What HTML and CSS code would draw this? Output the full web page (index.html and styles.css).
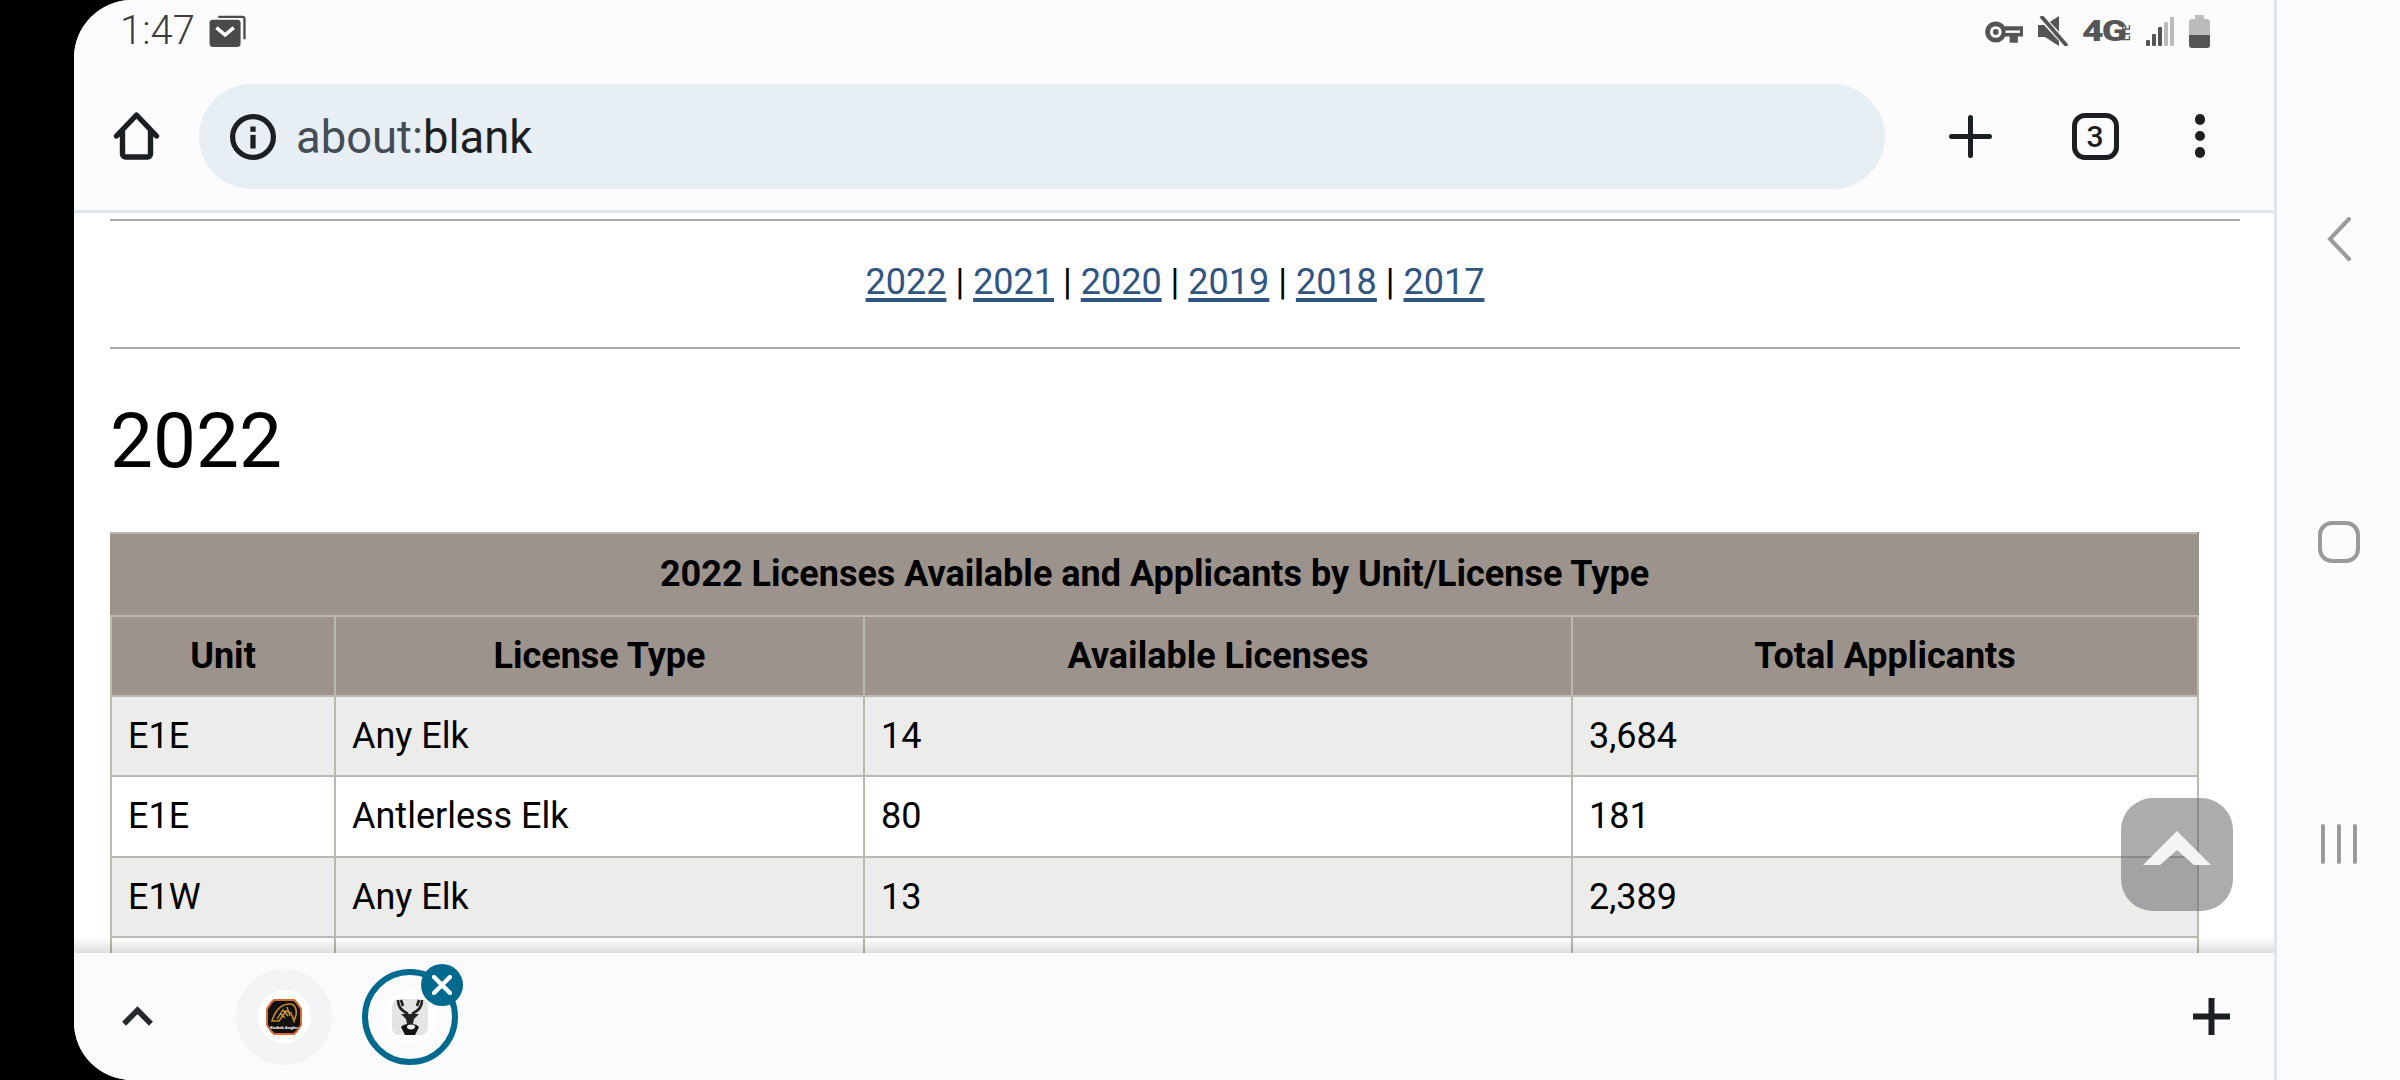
FILE: index.html
```html
<!DOCTYPE html>
<html lang="en">
<head>
<meta charset="utf-8">
<title>about:blank</title>
<link rel="stylesheet" href="styles.css">
</head>
<body>
<div class="device">
  <div class="app">
    <header class="chrome">
      <div class="status">
        <div class="status-left">
          <span class="time">1:47</span>
          <svg class="ic-mail" viewBox="0 0 37 33"><path d="M9 2h25a2 2 0 0 1 2 2v21" fill="none" stroke="#4a4a4a" stroke-width="2.4"/><rect x="0" y="5" width="32" height="28" rx="3.5" fill="#4a4a4a"/><path d="M7 13l9 7.5L25 13" fill="none" stroke="#fff" stroke-width="3.6"/></svg>
        </div>
        <div class="status-right">
          <svg class="ic-key" viewBox="0 0 37 21"><circle cx="10.5" cy="10.5" r="8" fill="none" stroke="#555" stroke-width="4.6"/><circle cx="10.5" cy="10.5" r="2.8" fill="#555"/><path d="M18 5h19v10h-5v6h-8v-6h-6z" fill="#555"/><path d="M20 9h14v2.4H20z" fill="#fcfcfe"/></svg>
          <svg class="ic-mute" viewBox="0 0 30 30"><path d="M0 9h7L21 0v30L7 21H0z" fill="#555"/><path d="M3 1l26 28" stroke="#fcfcfe" stroke-width="6.4"/><path d="M3 0l26 30" stroke="#555" stroke-width="3.8"/></svg>
          <span class="net"><span class="net-main">4G</span><span class="net-sub">LTE</span></span>
          <svg class="ic-signal" viewBox="0 0 28 29"><rect x="0" y="23" width="4" height="6" rx="1" fill="#555"/><rect x="6" y="17" width="4" height="12" rx="1" fill="#555"/><rect x="12" y="10" width="4" height="19" rx="1" fill="#555"/><rect x="18" y="5" width="4" height="24" rx="1" fill="#bbb"/><rect x="24" y="0" width="4" height="29" rx="1" fill="#bbb"/></svg>
          <svg class="ic-battery" viewBox="0 0 21 33"><path d="M6 0h9v4h3a3 3 0 0 1 3 3v13H0V7a3 3 0 0 1 3-3h3z" fill="#bcbcbc"/><path d="M0 20h21v10a3 3 0 0 1-3 3H3a3 3 0 0 1-3-3z" fill="#555"/></svg>
        </div>
      </div>
      <div class="toolbar">
        <div class="home-box">
          <svg class="ic-home" viewBox="0 0 46 48"><path d="M3 24L23 3l20 21M9 19v23a3 3 0 0 0 3 3h22a3 3 0 0 0 3-3V19" fill="none" stroke="#1b1f22" stroke-width="5.4" stroke-linecap="round" stroke-linejoin="round"/></svg>
        </div>
        <div class="omnibox">
          <svg class="ic-info" viewBox="0 0 44 44"><circle cx="22" cy="22" r="19.5" fill="none" stroke="#1b1f22" stroke-width="5"/><rect x="19.5" y="12" width="5" height="5" fill="#1b1f22"/><rect x="19.5" y="20" width="5" height="13" fill="#1b1f22"/></svg>
          <span class="url"><span class="url-scheme">about:</span>blank</span>
        </div>
        <div class="tool tool-plus">
          <svg class="ic-plus" viewBox="0 0 43 43"><path d="M21.5 2.5v38M2.5 21.5h38" fill="none" stroke="#1b1f22" stroke-width="5" stroke-linecap="round"/></svg>
        </div>
        <div class="tool tool-tabs"><span class="tab-count">3</span></div>
        <div class="tool tool-menu"><i class="dot"></i><i class="dot"></i><i class="dot"></i></div>
      </div>
    </header>

    <main class="content">
      <hr class="rule">
      <p class="years"><a href="#y2022">2022</a> | <a href="#y2021">2021</a> | <a href="#y2020">2020</a> | <a href="#y2019">2019</a> | <a href="#y2018">2018</a> | <a href="#y2017">2017</a></p>
      <hr class="rule">
      <h1 class="year-title" id="y2022">2022</h1>
      <table class="data">
        <colgroup><col class="c1"><col class="c2"><col class="c3"><col class="c4"></colgroup>
        <thead>
          <tr class="title-row"><th colspan="4">2022 Licenses Available and Applicants by Unit/License Type</th></tr>
          <tr><th>Unit</th><th>License Type</th><th>Available Licenses</th><th>Total Applicants</th></tr>
        </thead>
        <tbody>
          <tr><td>E1E</td><td>Any Elk</td><td>14</td><td>3,684</td></tr>
          <tr><td>E1E</td><td>Antlerless Elk</td><td>80</td><td>181</td></tr>
          <tr><td>E1W</td><td>Any Elk</td><td>13</td><td>2,389</td></tr>
          <tr><td></td><td></td><td></td><td></td></tr>
        </tbody>
      </table>
      <button class="to-top" type="button" aria-label="Back to top">
        <svg class="ic-up" viewBox="0 0 68 34"><path d="M34 0l34 34H51L34 19 17 34H0z" fill="#f4f4f4"/></svg>
      </button>
      <div class="shade"></div>
    </main>

    <footer class="tabstrip">
      <div class="strip-toggle">
        <svg class="ic-chev" viewBox="0 0 32 20"><path d="M3 17L16 4l13 13" fill="none" stroke="#25292c" stroke-width="5.4"/></svg>
      </div>
      <div class="group-tab">
        <div class="fav-wrap">
          <svg class="fav" viewBox="0 0 36 36"><path d="M8 1h20l3 3 4 6v16l-4 6-3 3H8l-3-3-4-6V10l4-6z" fill="#111" stroke="#d86a35" stroke-width="2"/><path d="M6 22C9 12 15 5 24 5c5 0 7 6 6 11l-2 6-3-8-5-2-7 10z" fill="none" stroke="#c98a2a" stroke-width="1.6"/><path d="M11 20l6-9 5 6M21 8l3 9M14 14l5 5" fill="none" stroke="#d9a040" stroke-width="1.2"/><text class="fav-text" x="18" y="30" text-anchor="middle">Kodiak Angler</text></svg>
        </div>
      </div>
      <div class="group-tab is-active">
        <div class="fav-wrap">
          <svg class="fav" viewBox="0 0 36 36"><rect width="36" height="36" rx="7" fill="#e4e4e4"/><path d="M6 1c0 7 3 10 10 14M30 1c0 7-3 10-10 14M9 1l2 6M27 1l-2 6" fill="none" stroke="#222" stroke-width="2.6"/><path d="M9 15h18l-5 5-1 5H15l-1-5z" fill="#222"/><path d="M9 28c3-3 5-3 9-3s6 0 9 3l-4 8H13z" fill="#111"/><ellipse cx="19" cy="28" rx="4" ry="2.4" fill="#eee"/></svg>
        </div>
        <span class="tab-close"><svg class="ic-x" viewBox="0 0 20 20"><path d="M2 2l16 16M18 2L2 18" fill="none" stroke="#fff" stroke-width="4.4" stroke-linecap="round"/></svg></span>
      </div>
      <div class="strip-add">
        <svg class="ic-plus2" viewBox="0 0 37 37"><path d="M18.5 0v37M0 18.5h37" fill="none" stroke="#1b1f22" stroke-width="6"/></svg>
      </div>
    </footer>
  </div>

  <nav class="navrail">
    <svg class="ic-back" viewBox="0 0 24 44"><path d="M22 2L3 22l19 20" fill="none" stroke="#9a9a9a" stroke-width="4" stroke-linecap="round"/></svg>
    <span class="ic-square"></span>
    <span class="ic-recents"><i></i><i></i><i></i></span>
  </nav>
</div>
</body>
</html>
```
FILE: styles.css
```css
* { box-sizing: border-box; }
html, body { margin: 0; height: 100%; background: #000; overflow: hidden; }
body { font-family: Roboto, "Liberation Sans", sans-serif; color: #000; }

.device { display: flex; width: 2400px; height: 1080px; padding-left: 74px; background: #000; }
.app {
  width: 2203px; height: 1080px; display: flex; flex-direction: column;
  background: #fff; border-right: 3px solid #dfe6eb;
  border-radius: 58px 0 0 58px; overflow: hidden;
}

/* top chrome */
.chrome { flex: 0 0 213px; background: #fcfcfe; border-bottom: 3px solid #dfe6eb; }
.status { height: 62px; display: flex; justify-content: space-between; padding: 0 64px 0 46px; }
.status-left { display: flex; align-items: flex-start; padding-top: 9px; }
.time { font-size: 40px; line-height: 44px; font-weight: 300; color: #3c3c3c; }
.ic-mail { width: 37px; height: 32px; margin: 6px 0 0 14px; }
.status-right { position: relative; width: 224px; display: flex; align-items: flex-start; }
.ic-key { width: 38px; height: 22px; margin: 21px 0 0 -1px; }
.ic-mute { width: 30px; height: 30px; margin: 16px 0 0 15px; }
.net { display: flex; align-items: flex-start; width: 52px; margin: 20px 0 0 14px; color: #555; }
.net-main { width: 40px; font-size: 30px; line-height: 21px; font-weight: 900; transform: scaleX(1.24); transform-origin: left; letter-spacing: -1.5px; }
.net-sub { font-size: 10px; line-height: 10px; font-weight: 700; writing-mode: vertical-rl; transform: rotate(180deg); height: 21px; }
.ic-signal { width: 28px; height: 29px; margin: 17px 0 0 12px; }
.ic-battery { width: 21px; height: 33px; margin: 15px 0 0 15px; }

.toolbar { height: 148px; display: flex; align-items: center; }
.home-box { flex: 0 0 125px; display: flex; justify-content: center; }
.ic-home { width: 47px; height: 48px; }
.omnibox {
  flex: 0 0 1686px; height: 105px; display: flex; align-items: center;
  padding-left: 31px; background: #e7eef4; border-radius: 53px;
}
.ic-info { width: 46px; height: 46px; margin-top: 1px; }
.url { margin: 3px 0 0 20px; font-size: 45.4px; line-height: 52px; color: #1c1f22; }
.url-scheme { color: #444c55; }
.tool { display: flex; align-items: center; justify-content: center; }
.tool-plus { flex: 0 0 170px; }
.ic-plus { width: 43px; height: 43px; }
.tool-tabs { flex: 0 0 80px; }
.tab-count {
  width: 47px; height: 47px; display: flex; align-items: center; justify-content: center;
  border: 5px solid #1b1f22; border-radius: 13px; font-size: 30px; font-weight: 500; color: #1b1f22;
}
.tool-menu { flex: 0 0 130px; flex-direction: column; gap: 6px; }
.dot { width: 10.5px; height: 10.5px; border-radius: 50%; background: #1b1f22; }

/* page */
.content { position: relative; flex: 0 0 740px; overflow: hidden; padding: 6px 34px 0 36px; background: #fff; }
.rule { margin: 0; height: 2px; border: 0; background: #a9a9a9; }
.years { margin: 0; height: 126px; padding-bottom: 3px; line-height: 123px; text-align: center; font-size: 36px; }
.years a { color: #2f5580; text-decoration: underline; text-decoration-thickness: 4px; text-underline-offset: 4px; }
.year-title { margin: 48px 0 0; font-size: 76.5px; line-height: 89px; font-weight: 400; }
.data { margin: 46px 0 0; width: 2087px; table-layout: fixed; border-collapse: collapse; font-size: 36px; }
.c1 { width: 224px; } .c2 { width: 529px; } .c3 { width: 708px; } .c4 { width: 626px; }
.data th, .data td { height: 80.4px; padding: 0 16px; border: 2px solid #bbb8b2; }
.data th { background: #9c938c; font-weight: 700; text-align: center; }
.data .title-row th { height: 82.5px; border-color: #bbb8b2; border-bottom-color: #bbb8b2; border-left-color: #9c938c; border-right-color: #9c938c; }
.data td { text-align: left; }
.data tbody tr:nth-child(odd) td { background: #ececea; }
.to-top {
  position: absolute; left: 2047px; top: 585px; width: 112px; height: 113px; padding: 0;
  display: flex; align-items: center; justify-content: center;
  border: 0; border-radius: 32px; background: rgba(88,90,93,.5);
}
.ic-up { width: 68px; height: 34px; margin-bottom: 14px; }
.shade { position: absolute; left: 0; right: 0; bottom: 0; height: 16px; background: linear-gradient(rgba(0,0,0,0), rgba(0,0,0,.13)); }

/* tab strip */
.tabstrip { flex: 0 0 127px; display: flex; align-items: center; background: #fbfbfe; padding-right: 44px; }
.strip-toggle { flex: 0 0 126px; display: flex; justify-content: center; }
.ic-chev { width: 33px; height: 21px; }
.group-tab { position: relative; flex: 0 0 96px; height: 96px; margin: 0 15px 0 36px; display: flex; align-items: center; justify-content: center; border-radius: 50%; background: #f3f4f6; }
.group-tab + .group-tab { margin-left: 15px; background: none; border: 6px solid #006a8e; }
.fav-wrap { width: 53px; height: 53px; border-radius: 50%; background: #fff; display: flex; align-items: center; justify-content: center; }
.fav { width: 36px; height: 36px; }
.fav-text { font-size: 4.4px; font-weight: 700; fill: #fff; }
.tab-close { position: absolute; left: 53px; top: -11px; width: 42px; height: 42px; border-radius: 50%; background: #006a8e; display: flex; align-items: center; justify-content: center; }
.ic-x { width: 20px; height: 20px; }
.strip-add { margin-left: auto; display: flex; }
.ic-plus2 { width: 37px; height: 37px; }

/* system nav */
.navrail { flex: 1; display: flex; flex-direction: column; align-items: center; background: #fcfcfe; padding-top: 217px; }
.ic-back { width: 24px; height: 44px; }
.ic-square { width: 42px; height: 42px; margin-top: 260px; border: 4px solid #9a9a9a; border-radius: 14px; }
.ic-recents { display: flex; gap: 12px; margin-top: 261px; }
.ic-recents i { width: 4px; height: 40px; border-radius: 2px; background: #9a9a9a; }
```
